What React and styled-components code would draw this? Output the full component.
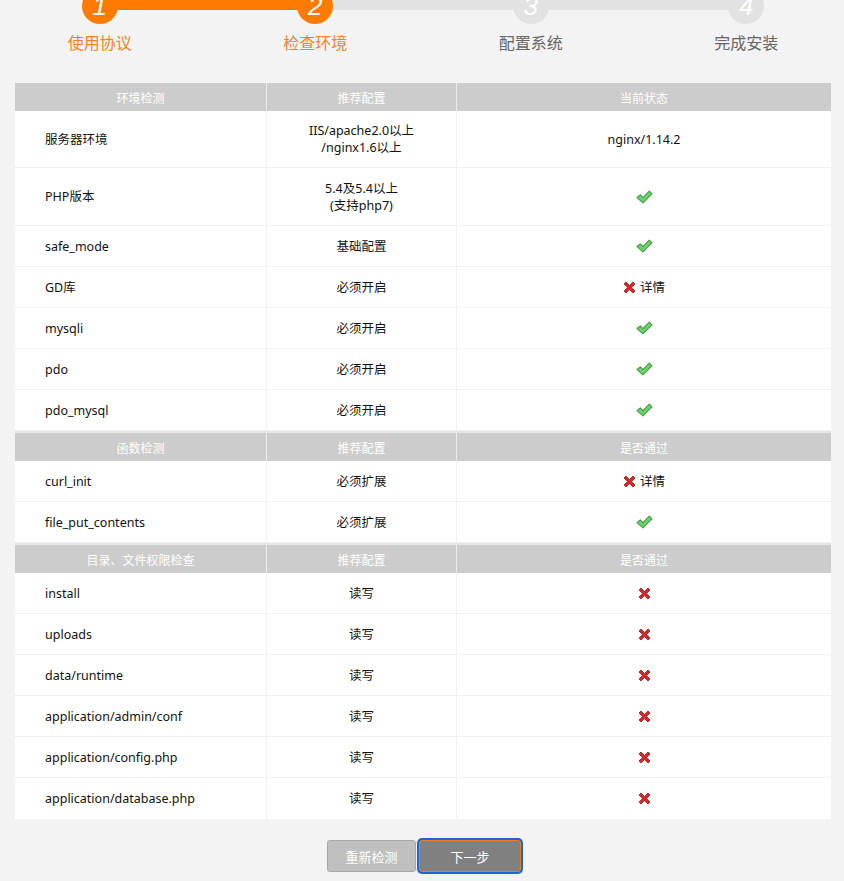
import React from "react";
import styled, { createGlobalStyle } from "styled-components";

const Global = createGlobalStyle`
  html, body { margin: 0; padding: 0; background: #f3f3f3; }
  body { font-family: "Noto Sans", "Noto Sans CJK SC", sans-serif; color: #222; overflow: hidden; }
`;

const ORANGE = "#ff7b00";

const Page = styled.div`
  width: 844px;
  height: 881px;
  overflow: hidden;
`;

const Steps = styled.div`
  position: relative;
  display: grid;
  grid-template-columns: repeat(4, 215.5px);
  margin: -12px 0 0 -8px;
  height: 95px;
  & .track {
    position: absolute; left: 108px; top: 2px; height: 20px; width: 646px;
    background: #e2e2e2;
  }
  & .track-done { position: absolute; left: 108px; top: 2px; height: 20px; width: 213px; background: ${ORANGE}; }
`;

const Step = styled.div`
  position: relative;
  display: flex;
  flex-direction: column;
  align-items: center;
  & .num {
    width: 36px; height: 36px; border-radius: 50%;
    background: ${(p) => (p.$done ? ORANGE : "#e2e2e2")};
    color: #fff; font: italic 26px/36px "Liberation Sans", sans-serif;
    text-align: center; margin-bottom: 7px;
  }
  & .label {
    font-size: 16px; line-height: 22px;
    color: ${(p) => (p.$done ? "#f7812a" : "#666")};
    font-family: "Noto Sans CJK SC", sans-serif;
  }
`;

const Table = styled.div`
  width: 816px;
  margin-left: 15px;
  background: #fff;
`;

const Row = styled.div`
  display: grid;
  grid-template-columns: 252px 190px 374px;
  box-sizing: border-box;
  min-height: ${(p) => p.$h || 41}px;
  border-bottom: 1px solid #f0f0f0;
  &:last-child { border-bottom: none; }
`;

const HeadRow = styled.div`
  display: grid;
  grid-template-columns: 252px 190px 374px;
  box-sizing: border-box;
  height: ${(p) => (p.$first ? 28 : 30)}px;
  background: #cccccc;
  border-top: ${(p) => (p.$first ? "none" : "2px solid #e6e6e6")};
  color: #fff;
  font-size: 12px;
  font-family: "Noto Sans CJK SC", sans-serif;
  & > div {
    display: flex; align-items: center; justify-content: center;
    border-right: 1px solid #ececec;
  }
  & > div:last-child { border-right: none; }
`;

const Cell = styled.div`
  display: flex;
  align-items: center;
  justify-content: ${(p) => (p.$left ? "flex-start" : "center")};
  padding-left: ${(p) => (p.$left ? "30px" : "0")};
  text-align: center;
  font-size: 12.5px;
  line-height: 17px;
  color: #111;
  border-right: 1px solid #f0f0f0;
  &:last-child { border-right: none; }
  & .detail { margin-left: 4px; }
`;

const Buttons = styled.div`
  display: flex;
  justify-content: center;
  gap: 3px;
  padding: 21px 0 0 4px;
`;

const Button = styled.button`
  height: 32px;
  box-sizing: border-box;
  border-radius: 3px;
  color: #fff;
  font: 13px "Noto Sans CJK SC", sans-serif;
  padding: 0;
  width: ${(p) => (p.$primary ? "102px" : "89px")};
  background: ${(p) => (p.$primary ? "#808080" : "#c0c0c0")};
  border: 1px solid ${(p) => (p.$primary ? "#f07a1a" : "#a8a8a8")};
  box-shadow: ${(p) => (p.$primary ? "0 0 0 2px #1a66d9" : "none")};
`;

const Check = () => (
  <svg width="17" height="14" viewBox="0 0 16 13">
    <path d="M1 7 L4 4.5 L6.5 7 L12.5 1 L15 3.5 L6.5 12 Z" fill="#6fd06f" stroke="#3c9c3c" strokeWidth="1" strokeLinejoin="round" />
  </svg>
);

const Cross = () => (
  <svg width="13" height="13" viewBox="0 0 13 13">
    <path d="M1 3 L3 1 L6.5 4.5 L10 1 L12 3 L8.5 6.5 L12 10 L10 12 L6.5 8.5 L3 12 L1 10 L4.5 6.5 Z" fill="#d42a2a" stroke="#9e1414" strokeWidth="0.8" strokeLinejoin="round" />
  </svg>
);

const ok = <Check />;
const fail = <><Cross /><span className="detail">详情</span></>;
const failOnly = <Cross />;

const env = [
  ["服务器环境", <>IIS/apache2.0以上<br />/nginx1.6以上</>, "nginx/1.14.2", 57],
  ["PHP版本", <>5.4及5.4以上<br />(支持php7)</>, ok, 58],
  ["safe_mode", "基础配置", ok],
  ["GD库", "必须开启", fail],
  ["mysqli", "必须开启", ok],
  ["pdo", "必须开启", ok],
  ["pdo_mysql", "必须开启", ok],
];

const funcs = [
  ["curl_init", "必须扩展", fail],
  ["file_put_contents", "必须扩展", ok],
];

const dirs = ["install", "uploads", "data/runtime", "application/admin/conf", "application/config.php", "application/database.php"].map(
  (d) => [d, "读写", failOnly]
);

const steps = [
  ["1", "使用协议", true],
  ["2", "检查环境", true],
  ["3", "配置系统", false],
  ["4", "完成安装", false],
];

const Section = ({ head, rows, first }) => (
  <>
    <HeadRow $first={first}>
      {head.map((h) => <div key={h}>{h}</div>)}
    </HeadRow>
    {rows.map(([a, b, c, h], i) => (
      <Row key={i} $h={h}>
        <Cell $left>{a}</Cell>
        <Cell>{b}</Cell>
        <Cell>{c}</Cell>
      </Row>
    ))}
  </>
);

export default function App() {
  return (
    <Page>
      <Global />
      <Steps>
        <div className="track" />
        <div className="track-done" />
        {steps.map(([n, l, d]) => (
          <Step key={n} $done={d}>
            <div className="num">{n}</div>
            <div className="label">{l}</div>
          </Step>
        ))}
      </Steps>
      <Table>
        <Section first head={["环境检测", "推荐配置", "当前状态"]} rows={env} />
        <Section head={["函数检测", "推荐配置", "是否通过"]} rows={funcs} />
        <Section head={["目录、文件权限检查", "推荐配置", "是否通过"]} rows={dirs} />
      </Table>
      <Buttons>
        <Button>重新检测</Button>
        <Button $primary>下一步</Button>
      </Buttons>
    </Page>
  );
}
